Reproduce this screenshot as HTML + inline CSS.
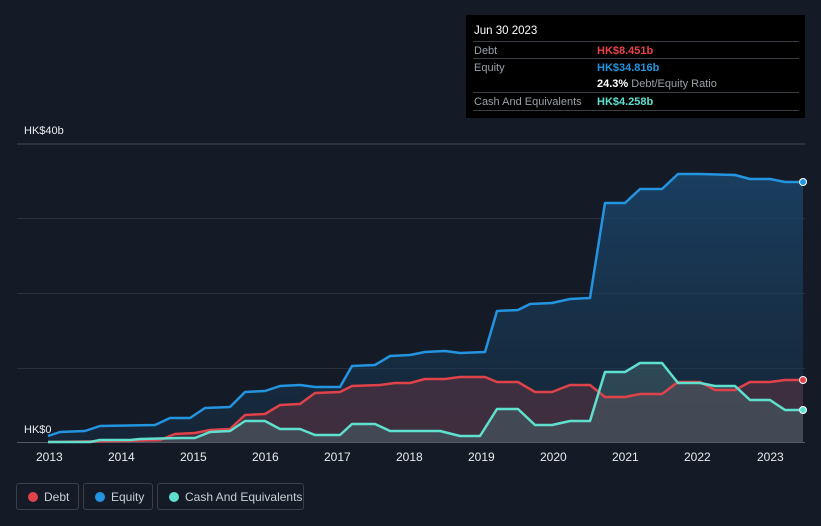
<!DOCTYPE html>
<html><head><meta charset="utf-8"><style>
body{margin:0;width:821px;height:526px;background:#151b26;font-family:"Liberation Sans",sans-serif;overflow:hidden;position:relative}
.tt{position:absolute;left:466px;top:15px;width:339px;height:103px;background:#000;color:#fff;font-size:11px}
.tt .h{position:absolute;left:8px;top:10px;font-size:11.5px}
.row{position:absolute;left:7px;width:326px;border-top:1px solid #3a3d44;height:17px}
.row span{position:absolute;top:3px}
.lg{position:absolute;top:483px;height:27px;border:1px solid #3a404b;border-radius:3px;color:#c9cdd4;font-size:12px;box-sizing:border-box}
.lg i{position:absolute;left:11px;top:8px;width:10px;height:10px;border-radius:50%}
.lg span{position:absolute;left:27px;top:6px}
.ax{position:absolute;top:450px;color:#e8eaee;font-size:12px}
</style></head><body>
<svg width="821" height="526" style="position:absolute;left:0;top:0">
<g stroke="#2c323d" stroke-width="1">
<line x1="17" y1="144" x2="805" y2="144" stroke="#444a55"/>
<line x1="17" y1="218.5" x2="805" y2="218.5"/>
<line x1="17" y1="293.5" x2="805" y2="293.5"/>
<line x1="17" y1="368.5" x2="805" y2="368.5"/>
<line x1="17" y1="442.5" x2="805" y2="442.5" stroke="#555b66"/>
</g>
<defs>
<linearGradient id="ge" x1="0" y1="0" x2="0" y2="1"><stop offset="0" stop-color="#1b4a73" stop-opacity=".75"/><stop offset="1" stop-color="#163048" stop-opacity=".5"/></linearGradient>
</defs>
<polygon fill="url(#ge)" points="48,436 60,432 85,431 100,426 155,425 170,418 190,418 205,408 230,407 245,392 265,391 280,386 300,385 315,387 340,387 352,366 375,365 390,356 410,355 425,352 445,351 460,353 485,352 497,311 518,310 530,304 552,303 570,299 590,298 605,203 625,203 640,189 662,189 678,174 700,174 735,175 750,179 770,179 785,182 803,182 803,442 48,442"/>
<polygon fill="#5a3442" fill-opacity=".6" points="48,442 120,441 160,440 175,434 195,433 210,430 230,429 245,415 265,414 280,405 300,404 315,393 340,392 352,386 380,385 395,383 410,383 425,379 445,379 460,377 485,377 497,382 518,382 535,392 552,392 570,385 590,385 605,397 625,397 640,394 662,394 678,382 700,382 715,390 735,390 750,382 770,382 785,380 803,380 803,442"/>
<polygon fill="#4a6a6e" fill-opacity=".45" points="48,442 90,442 100,440 130,440 140,439 180,438 195,438 210,432 230,431 245,421 265,421 280,429 300,429 315,435 340,435 352,424 375,424 390,431 440,431 460,436 480,436 497,409 518,409 535,425 552,425 570,421 590,421 605,372 625,372 640,363 662,363 678,383 700,383 715,386 735,386 750,400 770,400 785,410 803,410 803,442"/>
<g fill="none" stroke-width="2.5" stroke-linejoin="round">
<polyline stroke="#2394e0" points="48,436 60,432 85,431 100,426 155,425 170,418 190,418 205,408 230,407 245,392 265,391 280,386 300,385 315,387 340,387 352,366 375,365 390,356 410,355 425,352 445,351 460,353 485,352 497,311 518,310 530,304 552,303 570,299 590,298 605,203 625,203 640,189 662,189 678,174 700,174 735,175 750,179 770,179 785,182 803,182"/>
<polyline stroke="#e0424a" points="48,442 120,441 160,440 175,434 195,433 210,430 230,429 245,415 265,414 280,405 300,404 315,393 340,392 352,386 380,385 395,383 410,383 425,379 445,379 460,377 485,377 497,382 518,382 535,392 552,392 570,385 590,385 605,397 625,397 640,394 662,394 678,382 700,382 715,390 735,390 750,382 770,382 785,380 803,380"/>
<polyline stroke="#5fe0cf" points="48,442 90,442 100,440 130,440 140,439 180,438 195,438 210,432 230,431 245,421 265,421 280,429 300,429 315,435 340,435 352,424 375,424 390,431 440,431 460,436 480,436 497,409 518,409 535,425 552,425 570,421 590,421 605,372 625,372 640,363 662,363 678,383 700,383 715,386 735,386 750,400 770,400 785,410 803,410"/>
</g>
<circle cx="803" cy="182" r="3.5" fill="#2394e0" stroke="#fff" stroke-width="1"/>
<circle cx="803" cy="380" r="3.5" fill="#e0424a" stroke="#fff" stroke-width="1"/>
<circle cx="803" cy="410" r="3.5" fill="#5fe0cf" stroke="#fff" stroke-width="1"/>
</svg>
<div style="position:absolute;left:24px;top:125px;color:#e8eaee;font-size:11px">HK$40b</div>
<div style="position:absolute;left:24px;top:424px;color:#e8eaee;font-size:11px">HK$0</div>
<div class="ax" style="left:36px">2013</div><div class="ax" style="left:108px">2014</div><div class="ax" style="left:180px">2015</div><div class="ax" style="left:252px">2016</div><div class="ax" style="left:324px">2017</div><div class="ax" style="left:396px">2018</div><div class="ax" style="left:468px">2019</div><div class="ax" style="left:540px">2020</div><div class="ax" style="left:612px">2021</div><div class="ax" style="left:684px">2022</div><div class="ax" style="left:757px">2023</div>
<div class="tt">
<div class="h">Jun 30 2023</div>
<div class="row" style="top:26px"><span style="left:1px;color:#9aa0a8">Debt</span><span style="left:124px;color:#e8434b;font-weight:bold">HK$8.451b</span></div>
<div class="row" style="top:43px"><span style="left:1px;color:#9aa0a8">Equity</span><span style="left:124px;color:#2394e0;font-weight:bold">HK$34.816b</span></div>
<div class="row" style="top:60px;border-top:none"><span style="left:124px;color:#fff"><b>24.3%</b> <span style="position:static;color:#9aa0a8">Debt/Equity Ratio</span></span></div>
<div class="row" style="top:77px;border-bottom:1px solid #3a3d44"><span style="left:1px;color:#9aa0a8">Cash And Equivalents</span><span style="left:124px;color:#5fe0cf;font-weight:bold">HK$4.258b</span></div>
</div>
<div class="lg" style="left:16px;width:63px"><i style="background:#e0424a"></i><span>Debt</span></div>
<div class="lg" style="left:83px;width:70px"><i style="background:#2394e0"></i><span>Equity</span></div>
<div class="lg" style="left:157px;width:147px"><i style="background:#5fe0cf"></i><span>Cash And Equivalents</span></div>
</body></html>
